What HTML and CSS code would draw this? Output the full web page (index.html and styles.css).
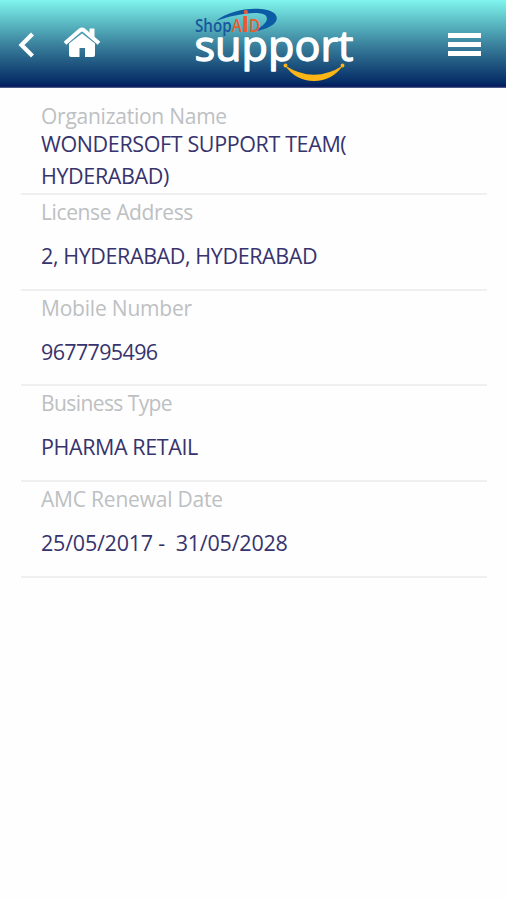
FILE: index.html
```html
<!DOCTYPE html>
<html lang="en">
<head>
    <meta charset="UTF-8">
    <meta name="viewport" content="width=device-width, initial-scale=1.0">
    <title>ShopAID Support</title>
    <link rel="stylesheet" href="styles.css">
</head>
<body>
    <header class="header">
        <svg class="back" width="18" height="28" viewBox="0 0 18 28">
            <path d="M15.500 3 L4.500 14 L15.500 25" fill="none" stroke="#fff" stroke-width="4.200"/>
        </svg>
        <svg class="home" width="38" height="32" viewBox="0 0 38 32">
            <path d="M6 17.500 L19 7.500 L32 17.500 V29 Q32 31 30 31 H22 V22 H16.500 V31 H8 Q6 31 6 29 Z" fill="#fff"/>
            <path d="M26.500 2.500 H31.500 V12 L26.500 8 Z" fill="#fff"/>
            <path d="M2 17.300 L17 4.300 Q19 2.800 21 4.300 L36 17.300" fill="none" stroke="#fff" stroke-width="4"/>
        </svg>
        <svg class="logo" width="170" height="80" viewBox="0 0 170 80">
            <path d="M26 19 C40 7 72 3 84 11 C93 19 79 28 63 29.500 C72 25 81 18 75 13 C67 8 42 13 26 19 Z" fill="#0b5ca4"/>
            <text class="shop" x="5" y="30" textLength="65" lengthAdjust="spacingAndGlyphs">Shop<tspan class="aid">A</tspan><tspan class="aid big">i</tspan><tspan class="aid">D</tspan></text>
            <text class="support" x="4.500" y="59" textLength="159" lengthAdjust="spacingAndGlyphs">support</text>
            <path d="M95 63.500 Q124 82 153 63.500 Q142 79 124 79 Q106 79 95 63.500 Z" fill="#fdb515"/>
            <circle cx="95.500" cy="63.500" r="1.900" fill="#fdb515"/>
            <circle cx="152.500" cy="63.500" r="1.900" fill="#fdb515"/>
        </svg>
        <div class="menu">
            <span></span>
            <span></span>
            <span></span>
        </div>
    </header>

    <div class="container">
        <div class="row">
            <div class="label org">Organization Name</div>
            <div class="value team">WONDERSOFT SUPPORT TEAM(<br>HYDERABAD)</div>
        </div>
        <div class="row">
            <div class="label address">License Address</div>
            <div class="value city">2, HYDERABAD, HYDERABAD</div>
        </div>
        <div class="row">
            <div class="label mobile">Mobile Number</div>
            <div class="value phone">9677795496</div>
        </div>
        <div class="row">
            <div class="label business">Business Type</div>
            <div class="value pharma">PHARMA RETAIL</div>
        </div>
        <div class="row">
            <div class="label amc">AMC Renewal Date</div>
            <div class="value dates">25/05/2017 -&nbsp; 31/05/2028</div>
        </div>
    </div>
</body>
</html>
```
FILE: styles.css
```css
body {
    margin: 0;
    background-color: #fefefe;
    font-family: "Open Sans", "Noto Sans", sans-serif;
}
.header {
    display: flex;
    box-sizing: border-box;
    height: 88px;
    background: linear-gradient(#80f5ee 0%, #5cbcc4 25%, #397f9c 52%, #1b4f7c 76%, #062c66 94%, #03195c 98%, #65719b 100%);
}
.back {
    margin: 31px 0 0 17px;
}
.home {
    margin: 26px 0 0 28px;
}
.logo {
    margin: 2px 0 0 89px;
}
.shop {
    font-size: 18.5px;
    font-weight: 600;
    fill: #15589c;
}
.aid {
    fill: #ed5a29;
}
.big {
    font-size: 29px;
    font-weight: 700;
}
.support {
    font-size: 42px;
    fill: #fff;
    stroke: #fff;
    stroke-width: 1.3px;
    stroke-linejoin: round;
}
.menu {
    display: flex;
    flex-direction: column;
    gap: 4px;
    margin: 33px 0 0 88px;
}
.menu span {
    width: 33px;
    height: 5px;
    background-color: #fff;
}
.container {
    padding: 11.2px 19px 0 21px;
}
.row {
    box-sizing: border-box;
    height: 95.75px;
    padding: 3px 0 0 20px;
    border-bottom: 2px solid #eff1f1;
}
.label {
    height: 28px;
    color: #bdc0c2;
    font-size: 21px;
    line-height: 28px;
    white-space: nowrap;
}
.value {
    color: #37336d;
    font-size: 21.5px;
    line-height: 32px;
    padding-top: 14px;
    white-space: nowrap;
}
.org {
    letter-spacing: -0.25px;
}
.team {
    padding-top: 0;
    margin-top: -2px;
    letter-spacing: -0.38px;
}
.address {
    letter-spacing: -0.38px;
}
.city {
    letter-spacing: -0.4px;
}
.mobile {
    letter-spacing: -0.2px;
}
.phone {
    letter-spacing: -0.65px;
}
.business {
    letter-spacing: -0.58px;
}
.pharma {
    letter-spacing: -0.4px;
}
.amc {
    letter-spacing: -0.2px;
}
.dates {
    letter-spacing: -0.22px;
}
```
